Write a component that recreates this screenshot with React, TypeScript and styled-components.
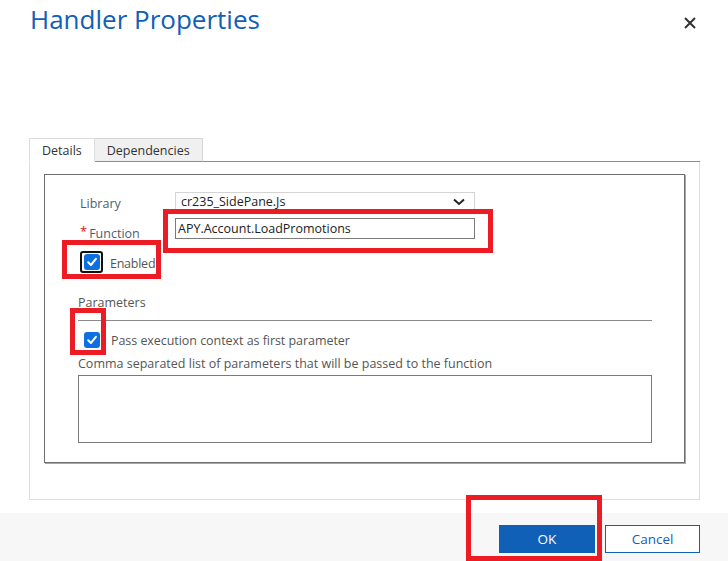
import React from 'react';
import styled, { createGlobalStyle } from 'styled-components';

const GlobalStyle = createGlobalStyle`
  html, body {
    margin: 0;
    padding: 0;
    background: #fff;
  }
  body {
    font-family: "Open Sans", "Noto Sans", sans-serif;
    color: #333;
  }
`;

const Page = styled.div`
  position: relative;
  width: 728px;
  height: 561px;
  overflow: hidden;
  display: flex;
  flex-direction: column;
`;

const Header = styled.div`
  height: 138px;
  display: flex;
  justify-content: space-between;
  align-items: flex-start;
  padding: 0 31px 0 30px;
  box-sizing: border-box;
`;

const Title = styled.h1`
  margin: 1px 0 0;
  font-size: 26px;
  line-height: 36px;
  font-weight: 400;
  color: #1160b7;
`;

const CloseButton = styled.button`
  margin-top: 16px;
  width: 14px;
  height: 14px;
  padding: 0;
  border: none;
  background: none;
  display: flex;
  align-items: center;
  justify-content: center;
  cursor: pointer;
`;

const Tabs = styled.div`
  margin: 0 28px 0 29px;
  display: flex;
  height: 24px;
`;

const Tab = styled.div<{ $active?: boolean }>`
  box-sizing: border-box;
  height: 24px;
  padding: 0 12px;
  display: flex;
  align-items: center;
  font-size: 12.5px;
  color: #333;
  background: ${(p) => (p.$active ? '#fff' : '#f0f0f0')};
  border: 1px solid ${(p) => (p.$active ? '#ddd' : '#d6d6d6')};
  border-left: ${(p) => (p.$active ? '1px solid #ddd' : 'none')};
  border-bottom: ${(p) => (p.$active ? '1px solid #fff' : '1px solid #8c8c8c')};
`;

const TabFiller = styled.div`
  flex: 1;
  border-bottom: 1px solid #8c8c8c;
`;

const TabPanel = styled.div`
  margin: 0 28px 0 29px;
  padding: 12px 14px 36px;
  border: 1px solid #ddd;
  border-top: none;
`;

const Fieldset = styled.div`
  border: 1px solid #6f6f6f;
  box-shadow: 1px 1px 0 #a6a6a6;
  padding: 17px 32px 19px 33px;
`;

const FieldRow = styled.div<{ $gap?: number; $height: number }>`
  display: grid;
  grid-template-columns: 97px 300px;
  margin-top: ${(p) => p.$gap ?? 0}px;
  height: ${(p) => p.$height}px;
`;

const Label = styled.div<{ $offset?: number }>`
  font-size: 12.5px;
  line-height: 16px;
  color: #4f5d73;
  padding-top: ${(p) => p.$offset ?? 0}px;
  padding-left: 2px;
  display: flex;
  align-items: flex-start;
`;

const Required = styled.span`
  color: #d21414;
  font-size: 13px;
  margin-right: 2px;
  margin-top: -3px;
`;

const Select = styled.div`
  box-sizing: border-box;
  height: 19px;
  border: 1px solid #d4d4d4;
  display: flex;
  align-items: center;
  justify-content: space-between;
  padding: 0 9px 0 5px;
  font-size: 12.5px;
  color: #222;
`;

const TextInput = styled.div`
  box-sizing: border-box;
  height: 21px;
  border: 1px solid #7a7a7a;
  display: flex;
  align-items: center;
  padding: 0 2px;
  font-size: 12.5px;
  color: #222;
`;

const CheckRow = styled.div<{ $gap: number; $height: number }>`
  display: flex;
  align-items: flex-start;
  height: ${(p) => p.$height}px;
  margin-top: ${(p) => p.$gap}px;
  font-size: 12.5px;
  color: #555;
`;

const FocusRing = styled.span`
  box-sizing: border-box;
  flex: none;
  width: 23px;
  height: 22px;
  border: 2px solid #111;
  border-radius: 3px;
  display: flex;
  align-items: center;
  justify-content: center;
  margin-left: 2px;
  margin-right: 7px;
`;

const Checkbox = styled.span<{ $indent?: number }>`
  box-sizing: border-box;
  flex: none;
  width: 16px;
  height: 16px;
  border-radius: 3px;
  background: #0d6fe0;
  display: flex;
  align-items: center;
  justify-content: center;
  margin-left: ${(p) => p.$indent ?? 0}px;
`;

const CheckText = styled.span<{ $left: number; $top: number; $tight?: boolean }>`
  margin-left: ${(p) => p.$left}px;
  margin-top: ${(p) => p.$top}px;
  line-height: 16px;
  letter-spacing: ${(p) => (p.$tight ? '-0.25px' : '-0.05px')};
`;

const SectionLabel = styled.div<{ $gap: number }>`
  margin-top: ${(p) => p.$gap}px;
  font-size: 12.5px;
  line-height: 18px;
  color: #555;
`;

const Divider = styled.div`
  margin-top: 8px;
  height: 1px;
  background: #8a8a8a;
`;

const TextArea = styled.div`
  margin-top: 2px;
  height: 68px;
  box-sizing: border-box;
  border: 1px solid #7a7a7a;
`;

const Footer = styled.div`
  margin-top: 13px;
  flex: 1;
  background: #f7f7f7;
  display: flex;
  justify-content: flex-end;
  align-items: flex-start;
  gap: 10px;
  padding: 12px 28px 0 0;
`;

const Button = styled.button<{ $primary?: boolean }>`
  box-sizing: border-box;
  width: ${(p) => (p.$primary ? '96px' : '95px')};
  height: 28px;
  font-family: "Open Sans", "Noto Sans", sans-serif;
  font-size: 13.5px;
  border: 1px solid #1160b7;
  background: ${(p) => (p.$primary ? '#1160b7' : '#fff')};
  color: ${(p) => (p.$primary ? '#fff' : '#1160b7')};
  cursor: pointer;
`;

// red annotation boxes drawn over the screenshot
const Highlight = styled.div`
  position: absolute;
  box-sizing: border-box;
  border: 5px solid #ed1c24;
  pointer-events: none;
`;

const Check = () => (
  <svg width="12" height="12" viewBox="0 0 12 12">
    <path d="M2.2 6.3 L4.9 9 L9.9 2.8" fill="none" stroke="#fff" strokeWidth="2" strokeLinecap="round" strokeLinejoin="round" />
  </svg>
);

const App: React.FC = () => {
  return (
    <Page>
      <GlobalStyle />
      <Header>
        <Title>Handler Properties</Title>
        <CloseButton aria-label="Close">
          <svg width="12" height="12" viewBox="0 0 12 12">
            <path d="M1 1 L11 11 M11 1 L1 11" stroke="#333" strokeWidth="2" />
          </svg>
        </CloseButton>
      </Header>

      <Tabs>
        <Tab $active>Details</Tab>
        <Tab>Dependencies</Tab>
        <TabFiller />
      </Tabs>
      <TabPanel>
        <Fieldset>
          <FieldRow $height={19}>
            <Label $offset={4}>Library</Label>
            <Select>
              <span>cr235_SidePane.Js</span>
              <svg width="12" height="8" viewBox="0 0 12 8">
                <path d="M1 1.5 L6 6 L11 1.5" fill="none" stroke="#222" strokeWidth="2" />
              </svg>
            </Select>
          </FieldRow>
          <FieldRow $gap={7} $height={21}>
            <Label $offset={8}>
              <Required>*</Required>Function
            </Label>
            <TextInput>APY.Account.LoadPromotions</TextInput>
          </FieldRow>
          <CheckRow $gap={12} $height={22}>
            <FocusRing>
              <Checkbox>
                <Check />
              </Checkbox>
            </FocusRing>
            <CheckText $left={0} $top={5} $tight>Enabled</CheckText>
          </CheckRow>

          <SectionLabel $gap={21}>Parameters</SectionLabel>
          <Divider />
          <CheckRow $gap={11} $height={16}>
            <Checkbox $indent={6}>
              <Check />
            </Checkbox>
            <CheckText $left={11} $top={1}>Pass execution context as first parameter</CheckText>
          </CheckRow>
          <SectionLabel $gap={7}>Comma separated list of parameters that will be passed to the function</SectionLabel>
          <TextArea />
        </Fieldset>
      </TabPanel>

      <Footer>
        <Button $primary>OK</Button>
        <Button>Cancel</Button>
      </Footer>

      <Highlight style={{ left: 163, top: 209, width: 330, height: 44 }} />
      <Highlight style={{ left: 62, top: 240, width: 99, height: 39 }} />
      <Highlight style={{ left: 70, top: 308, width: 36, height: 47 }} />
      <Highlight style={{ left: 466, top: 495, width: 136, height: 66 }} />
    </Page>
  );
};

export default App;
